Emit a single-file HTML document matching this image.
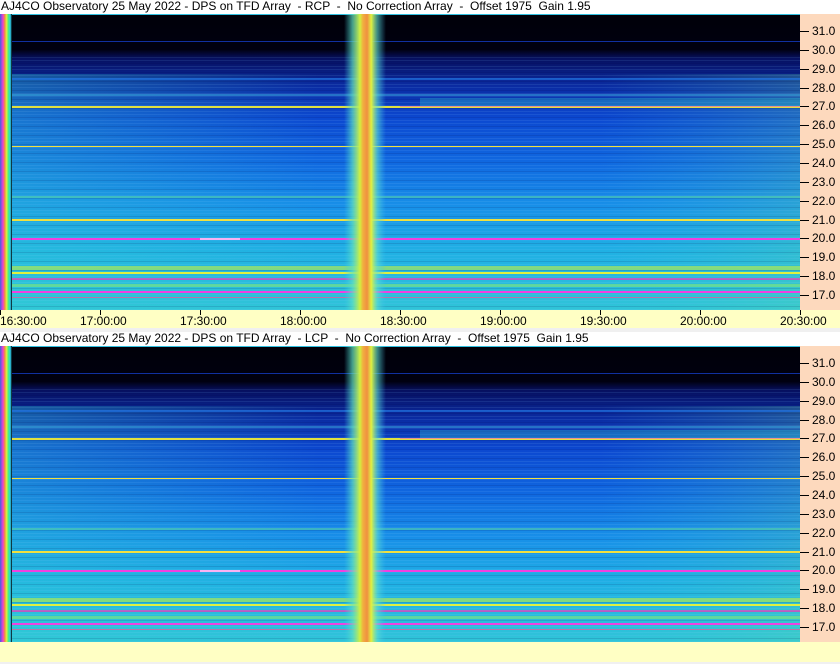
<!DOCTYPE html>
<html><head><meta charset="utf-8"><style>
html,body{margin:0;padding:0;width:840px;height:664px;overflow:hidden;background:#f0f0f0;font-family:"Liberation Sans",sans-serif}
.t{position:absolute;left:0;width:840px;height:14px;background:#fff;font-size:12px;line-height:13px;white-space:pre;color:#000;padding-left:1px}
.sp{position:absolute;left:0;width:800px;height:296px}
.fr{position:absolute;left:800px;width:40px;height:296px;background:#fdd9bd}
.ax{position:absolute;left:0;width:840px;height:18px;background:#ffffc4}
.lbl{position:absolute;font-size:12px;color:#000}
.fl{position:absolute;left:12px;font-size:12px;line-height:12px;color:#000}
.tk{position:absolute;left:0;width:9px;height:1px;background:#000}
.vt{position:absolute;top:0;width:1px;height:5px;background:#000}
</style></head><body>
<div class="t" style="top:0">AJ4CO Observatory 25 May 2022 - DPS on TFD Array  - RCP  -  No Correction Array  -  Offset 1975  Gain 1.95</div>
<div class="t" style="top:332px">AJ4CO Observatory 25 May 2022 - DPS on TFD Array  - LCP  -  No Correction Array  -  Offset 1975  Gain 1.95</div>

<svg width="0" height="0" style="position:absolute">
<defs>
<linearGradient id="bg" x1="0" y1="0" x2="0" y2="1">
<stop offset="0" stop-color="#000008"/>
<stop offset="0.12" stop-color="#000010"/>
<stop offset="0.15" stop-color="#061060"/>
<stop offset="0.24" stop-color="#0a2aa0"/>
<stop offset="0.35" stop-color="#0c48d0"/>
<stop offset="0.5" stop-color="#1068e0"/>
<stop offset="0.65" stop-color="#1890e8"/>
<stop offset="0.8" stop-color="#20b0e4"/>
<stop offset="1" stop-color="#30c4d8"/>
</linearGradient>
<linearGradient id="vb" x1="0" y1="0" x2="1" y2="0">
<stop offset="0" stop-color="#40d0e0" stop-opacity="0"/>
<stop offset="0.2" stop-color="#60e0c0" stop-opacity="0.7"/>
<stop offset="0.38" stop-color="#d0f040"/>
<stop offset="0.45" stop-color="#f0b040"/>
<stop offset="0.55" stop-color="#f09040"/>
<stop offset="0.65" stop-color="#e0f040"/>
<stop offset="0.8" stop-color="#60e0d0" stop-opacity="0.6"/>
<stop offset="1" stop-color="#40c0f0" stop-opacity="0"/>
</linearGradient>
<linearGradient id="lr" x1="0" y1="0" x2="1" y2="0">
<stop offset="0" stop-color="#30d0d0" stop-opacity="0.35"/>
<stop offset="0.4" stop-color="#30d0d0" stop-opacity="0"/>
<stop offset="0.75" stop-color="#30d0d0" stop-opacity="0"/>
<stop offset="1" stop-color="#60e0a0" stop-opacity="0.25"/>
</linearGradient>
<linearGradient id="rb" x1="0" y1="0" x2="1" y2="0">
<stop offset="0" stop-color="#4060e0"/>
<stop offset="0.25" stop-color="#f040d0"/>
<stop offset="0.4" stop-color="#f09040"/>
<stop offset="0.55" stop-color="#e0f040"/>
<stop offset="0.7" stop-color="#40f080"/>
<stop offset="0.85" stop-color="#30d0f0"/>
<stop offset="1" stop-color="#000"/>
</linearGradient>
<pattern id="st" width="800" height="9" patternUnits="userSpaceOnUse">
<rect y="1" width="800" height="1" fill="#80c0ff" opacity="0.12"/>
<rect y="4" width="800" height="1" fill="#000040" opacity="0.12"/>
<rect y="7" width="800" height="1" fill="#a0e0ff" opacity="0.1"/>
</pattern>
<g id="spec">
<rect width="800" height="296" fill="url(#bg)"/>
<rect y="60" width="800" height="236" fill="url(#lr)"/>
<rect y="40" width="800" height="256" fill="url(#st)"/>
<rect y="0" width="800" height="1" fill="#30c0e0"/>
<rect y="27" width="800" height="1" fill="#1030a0"/>
<rect y="64" width="800" height="2" fill="#2070e0" opacity="0.7"/>
<rect y="80" width="800" height="2" fill="#40b0e0" opacity="0.5"/>
<rect x="420" y="84" width="380" height="10" fill="#30c0d0" opacity="0.35"/>
<rect y="92" width="800" height="2" fill="#e0e040"/>
<rect x="400" y="92" width="400" height="1" fill="#f060c0" opacity="0.6"/>
<rect y="132" width="800" height="1" fill="#f0e040"/>
<rect y="182" width="800" height="2" fill="#60e0a0" opacity="0.5"/>
<rect y="205" width="800" height="2" fill="#f0e040"/>
<rect y="224" width="800" height="2" fill="#f040e0"/>
<rect y="224" x="200" width="40" height="2" fill="#fff" opacity="0.6"/>
<rect y="252" width="800" height="4" fill="#c0f040" opacity="0.6"/>
<rect y="258" width="800" height="2" fill="#e0f040"/>
<rect y="264" width="800" height="2" fill="#f040c0" opacity="0.7"/>
<rect y="270" width="800" height="3" fill="#90f060" opacity="0.5"/>
<rect y="277" width="800" height="2" fill="#f040e0"/>
<rect y="283" width="800" height="1" fill="#f060a0" opacity="0.7"/>
<rect x="344" y="0" width="42" height="296" fill="url(#vb)"/>
<rect x="0" width="12" height="296" fill="url(#rb)"/>
</g>
</defs>
</svg>

<svg class="sp" style="top:14px" viewBox="0 0 800 296"><use href="#spec"/></svg>
<svg class="sp" style="top:346px" viewBox="0 0 800 296"><use href="#spec"/></svg>

<div class="fr" style="top:14px" id="f1"></div>
<div class="fr" style="top:346px" id="f2"></div>

<div class="ax" style="top:310px" id="a1"></div>
<div style="position:absolute;top:328px;left:0;width:840px;height:4px;background:#f0f0f0"></div>
<div class="ax" style="top:642px;height:20px"></div>

<script>
['f1','f2'].forEach(function(id){
  var p=document.getElementById(id),h='';
  for(var i=0;i<=14;i++){
    var f=31-i, y=17+i*18.857;
    h+='<div class="tk" style="top:'+Math.round(y)+'px"></div><div class="fl" style="top:'+Math.round(y-6)+'px">'+f.toFixed(1)+'</div>';
  }
  p.innerHTML=h;
});
var a=document.getElementById('a1'),h='';
var t=['16:30:00','17:00:00','17:30:00','18:00:00','18:30:00','19:00:00','19:30:00','20:00:00','20:30:00'];
for(var i=0;i<9;i++){
  var x=i*100;
  h+='<div class="vt" style="left:'+x+'px"></div>';
  var l = i==0?0:x-20;
  h+='<div class="lbl" style="top:4px;left:'+l+'px">'+t[i]+'</div>';
}
a.innerHTML=h;
</script>
</body></html>
